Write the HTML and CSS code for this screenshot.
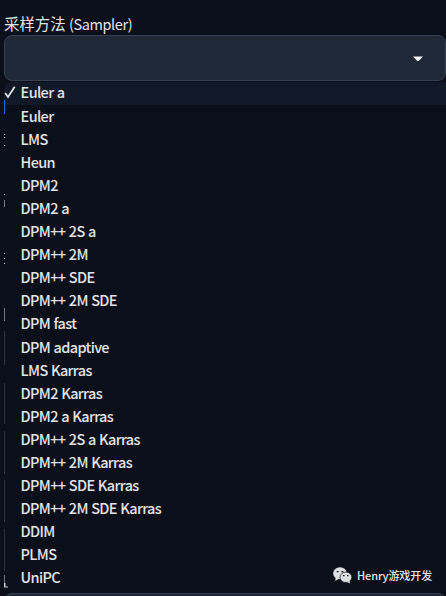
FILE: index.html
```html
<!DOCTYPE html>
<html lang="zh-CN">
<head>
<meta charset="utf-8">
<title>采样方法</title>
<link rel="stylesheet" href="styles.css">
</head>
<body>
<main class="panel">
  <div class="label"><span class="label-cn">采样方法</span> <span class="label-en">(Sampler)</span></div>
  <div class="select">
    <svg class="caret" width="10" height="6" viewBox="0 0 10 6"><path d="M0 .5H10L5.7 5H4.3Z"/></svg>
  </div>
  <ul class="options">
    <li class="selected"><svg class="check" width="12" height="14" viewBox="0 0 12 14"><path d="M1.2 8L4 12 10.7 1.8"/></svg><span>Euler a</span></li>
    <li><span>Euler</span></li>
    <li><span>LMS</span></li>
    <li><span>Heun</span></li>
    <li><span>DPM2</span></li>
    <li><span>DPM2 a</span></li>
    <li><span>DPM++ 2S a</span></li>
    <li><span>DPM++ 2M</span></li>
    <li><span>DPM++ SDE</span></li>
    <li><span>DPM++ 2M SDE</span></li>
    <li><span>DPM fast</span></li>
    <li><span>DPM adaptive</span></li>
    <li><span>LMS Karras</span></li>
    <li><span>DPM2 Karras</span></li>
    <li><span>DPM2 a Karras</span></li>
    <li><span>DPM++ 2S a Karras</span></li>
    <li><span>DPM++ 2M Karras</span></li>
    <li><span>DPM++ SDE Karras</span></li>
    <li><span>DPM++ 2M SDE Karras</span></li>
    <li><span>DDIM</span></li>
    <li><span>PLMS</span></li>
    <li><span>UniPC</span></li>
  </ul>
  <div class="next-field"></div>
  <!-- slivers of the controls behind the open menu -->
  <svg class="behind" width="10" height="596" viewBox="0 0 10 596">
    <path class="blue" d="M4 100h1v14h-1z"/>
    <path class="text-bit" d="M4 134h1v1h-1zM4 137h1v1h-1zM4 145h1v1h-1zM4 194h1v1h-1zM4 253h1v1h-1zM4 258h1v1h-1zM4 263h1v1h-1z"/>
    <path class="dim" d="M4 200h1v7h-1zM4 308h1v13h-1z"/>
    <path class="edge" d="M4 331h1v34h-1zM4 383h1v41h-1zM4 431h1v43h-1zM4 480h1v42h-1zM4 529h1v42h-1z"/>
    <path class="dim" d="M4 575h1v8h-1z"/>
    <path class="text-bit" d="M4 583h1.5v3.5H8v1H4z"/>
  </svg>
  <div class="watermark">
    <svg width="19" height="17" viewBox="0 0 19 17">
      <ellipse class="bubble" cx="7" cy="6.3" rx="6.8" ry="6"/>
      <path class="bubble" d="M2.8 10L2.2 13.8 6 12z"/>
      <ellipse class="bubble front" cx="12.9" cy="10.3" rx="5.9" ry="5.2"/>
      <path class="bubble" d="M14 15L17 16.4 16.6 13.5z"/>
      <path class="eyes" d="M3.8 4h1.8v1.3H3.8zM8.5 4h1.8v1.3H8.5zM10 8h1.5v1.2H10zM14 8h1.5v1.2H14z"/>
    </svg>
    <span>Henry游戏开发</span>
  </div>
</main>
</body>
</html>
```
FILE: styles.css
```css
body {
  margin: 0;
  background: #0b0f19;
  color: #e3e4e7;
  font-family: "Noto Sans CJK SC", sans-serif;
}
.panel {
  position: relative;
  box-sizing: border-box;
  width: 446px;
  height: 596px;
  padding: 13px 0 0 4px;
  overflow: hidden;
}
.label {
  height: 22px;
  line-height: 21px;
  font-size: 15px;
  white-space: nowrap;
}
.label-cn { font-size: 15.4px; }
.label-en {
  font-size: 14.5px;
  letter-spacing: -.4px;
}
.select {
  display: flex;
  align-items: center;
  justify-content: flex-end;
  box-sizing: border-box;
  height: 46px;
  padding: 2px 22px 0 0;
  border: 1px solid #374151;
  border-radius: 8px;
  background: #1f2937;
}
.caret { fill: #f3f4f6; }
.options {
  margin: 1px 0 0;
  padding: 0;
  list-style: none;
  font-size: 14.5px;
  font-weight: 500;
  letter-spacing: -.66px;
  word-spacing: .8px;
}
.options li {
  display: flex;
  align-items: center;
  box-sizing: border-box;
  height: 23.08px;
  padding: 0 0 1.8px 16.6px;
  line-height: 20px;
  white-space: nowrap;
}
.options .selected {
  padding-left: 0;
  padding-bottom: 2.6px;
  background: #111827;
  border-radius: 8px 0 0 0;
}
.check {
  width: 12px;
  margin-right: 4.6px;
  fill: none;
  stroke: #e8e9ec;
  stroke-width: 1.7;
}
.next-field {
  height: 20px;
  margin-top: 3px;
  border: 1px solid #374151;
  border-radius: 8px;
  background: #1f2937;
}
.behind {
  position: absolute;
  left: 0;
  top: 0;
}
.blue { fill: #2563eb; }
.text-bit { fill: #c5c7cc; }
.dim { fill: #71757d; }
.edge { fill: #293342; }
.watermark {
  position: absolute;
  left: 333px;
  top: 566px;
  display: flex;
  align-items: center;
  gap: 5px;
  height: 18px;
  font-size: 11px;
  font-weight: 500;
  letter-spacing: -.1px;
  white-space: nowrap;
}
.bubble { fill: #dedfe1; }
.front { stroke: #0b0f19; stroke-width: .7; }
.eyes { fill: #0b0f19; }
```
